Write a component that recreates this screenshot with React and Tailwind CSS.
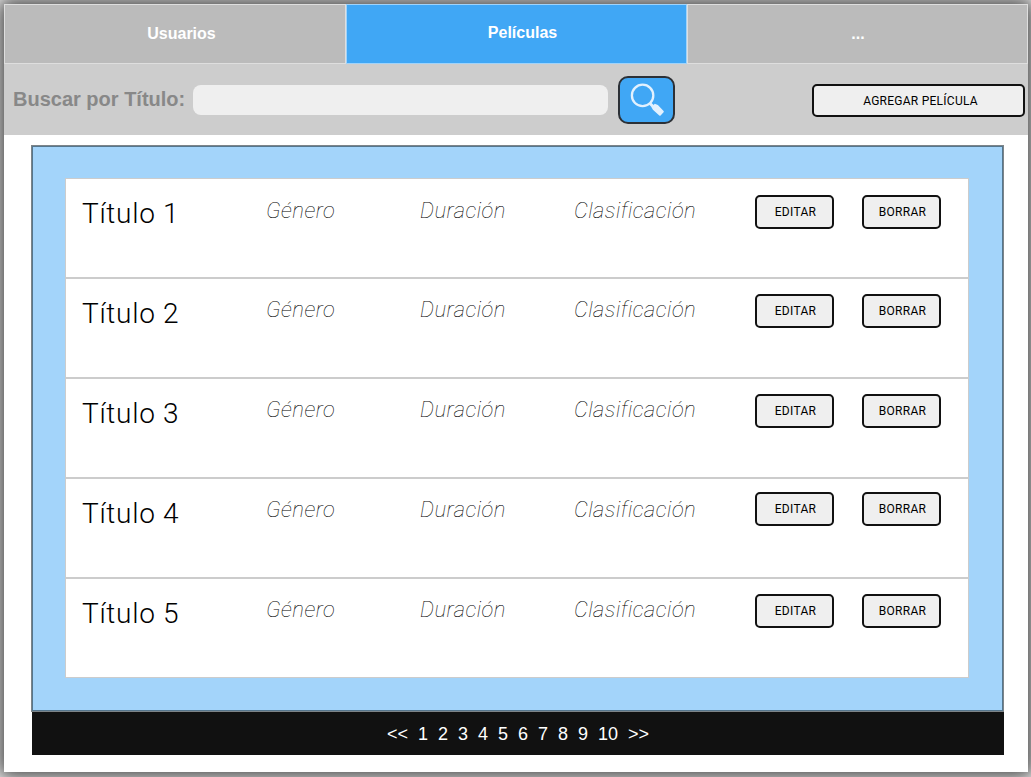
import React from "react";

const movies = [
  { title: "Título 1", meta: "pt-[16px]", actions: "pt-[16px]" },
  { title: "Título 2", meta: "pt-[15px]", actions: "pt-[15px]" },
  { title: "Título 3", meta: "pt-[15px]", actions: "pt-[15px]" },
  { title: "Título 4", meta: "pt-[15px]", actions: "pt-[13px]" },
  { title: "Título 5", meta: "pt-[15px]", actions: "pt-[15px]" },
];

const pages = ["<<", "1", "2", "3", "4", "5", "6", "7", "8", "9", "10", ">>"];

function ActionButton({ children }) {
  return (
    <button className="h-[34px] w-[79px] rounded-[5px] border-2 border-[#111] bg-[#efefef] pl-[2px] font-['Roboto'] text-[12px] leading-none tracking-[0.3px] text-black">
      {children}
    </button>
  );
}

function Tab({ children, className }) {
  return (
    <div className={"flex items-center justify-center border text-[16px] font-bold text-white " + className}>
      <span className="leading-none">{children}</span>
    </div>
  );
}

function SearchIcon() {
  return (
    <svg viewBox="0 0 36 36" className="h-9 w-9" fill="none">
      <circle cx="13.6" cy="13.4" r="10.7" stroke="#e2f1fe" strokeWidth="2.3" />
      <path d="M20.8 21.2l3 3" stroke="#e2f1fe" strokeWidth="3" />
      <path d="M22.4 25l3.4-3.2 3.1 1.1 5.7 6.2q.5.6 0 1.2l-3 3.1q-.7.6-1.3 0l-6.4-5.7z" fill="#e2f1fe" />
    </svg>
  );
}

export default function App() {
  return (
    <div className="h-[777px] w-[1031px] overflow-hidden bg-white pt-1 pl-1 font-['Liberation_Sans',sans-serif]">
      <div className="flex h-[768px] w-[1024px] flex-col bg-white shadow-[0_0_20px_6px_#444]">
        <nav className="flex h-[60px] shrink-0">
          <Tab className="w-[342px] border-[#dedede] bg-[#bbb] pl-[13px]">Usuarios</Tab>
          <Tab className="w-[341px] border-[#a0d3fa] bg-[#40a7f5] pb-[2px] pl-[12px]">Películas</Tab>
          <Tab className="w-[341px] border-[#dedede] bg-[#bbb] pl-px">...</Tab>
        </nav>
        <div className="flex h-[71px] shrink-0 items-center bg-[#cdcdcd] pl-[9px]">
          <label className="w-[180px] whitespace-nowrap pb-[2px] text-[20px] font-bold leading-none text-[#888]">Buscar por Título:</label>
          <input className="h-[30px] w-[415px] rounded-lg bg-[#efefef] px-2 outline-none" />
          <button aria-label="Buscar" className="ml-[10px] flex h-12 w-[57px] items-center justify-center rounded-[10px] border-2 border-[#2c3036] bg-[#40a7f5]">
            <SearchIcon />
          </button>
          <button className="mt-[2px] ml-[137px] h-[33px] w-[213px] rounded-[5px] border-2 border-[#111] bg-[#efefef] pl-[4px] font-['Roboto'] text-[12px] leading-none tracking-[0.25px] text-black">
            AGREGAR PELÍCULA
          </button>
        </div>
        <main className="ml-[27px] mt-[10px] w-[973px]">
          <section className="h-[567px] border border-[#7d8488] bg-[#a3d4fa]">
            <div className="h-full border border-[#55768d] px-8 pt-[31px]">
              <ul className="h-[500px] w-[904px] border border-[#ccc] bg-white">
                {movies.map((movie, i) => (
                  <li key={movie.title} className={"flex h-[100px] items-start " + (i < 4 ? "border-b-2 border-[#ccc]" : "")}>
                    <h2 className="w-[200px] pt-[18px] pl-[16px] font-['Roboto'] text-[28px] font-light leading-[34px] tracking-[0.7px] text-black">{movie.title}</h2>
                    <div className={"flex w-[489px] font-['Roboto'] text-[22px] font-thin italic leading-[31px] tracking-[0.45px] text-black [font-variant-ligatures:none] " + movie.meta}>
                      <span className="w-[154px]">Género</span>
                      <span className="w-[154px]">Duración</span>
                      <span>Clasificación</span>
                    </div>
                    <div className={"flex gap-7 " + movie.actions}>
                      <ActionButton>EDITAR</ActionButton>
                      <ActionButton>BORRAR</ActionButton>
                    </div>
                  </li>
                ))}
              </ul>
            </div>
          </section>
          <footer className="ml-px flex h-[43px] items-center justify-center gap-[10px] bg-[#111] text-[18px] leading-none text-white">
            {pages.map((page) => (
              <span key={page}>{page}</span>
            ))}
          </footer>
        </main>
      </div>
    </div>
  );
}
